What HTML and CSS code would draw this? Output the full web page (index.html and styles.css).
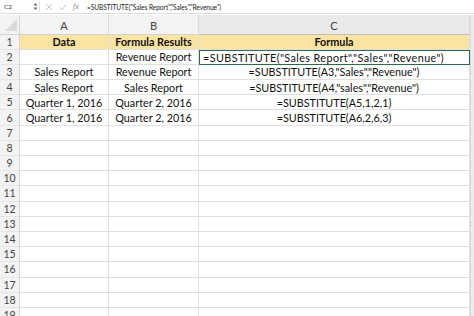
FILE: index.html
```html
<!DOCTYPE html>
<html>
<head>
<meta charset="utf-8">
<link rel="stylesheet" href="styles.css">
</head>
<body>
<div class="app">
  <div class="fbar">
    <div class="namebox">C2</div>
    <div class="stepper">
      <svg width="5" height="9" viewBox="0 0 5 9"><path d="M0.5 3.5 L2.5 1 L4.5 3.5 Z M0.5 5.5 L2.5 8 L4.5 5.5 Z" fill="#666"/></svg>
    </div>
    <div class="fsep"></div>
    <div class="ficons">
      <svg width="8" height="8" viewBox="0 0 8 8"><path d="M1 1 L7 7 M7 1 L1 7" stroke="#c4c4c4" stroke-width="1"/></svg>
      <svg width="8" height="8" viewBox="0 0 8 8"><path d="M1 4.5 L3 6.5 L7 1.5" stroke="#c4c4c4" stroke-width="1" fill="none"/></svg>
      <span class="fx">fx</span>
    </div>
    <div class="ftext">=SUBSTITUTE("Sales Report","Sales","Revenue")</div>
  </div>
  <div class="sheet">
    <div class="corner"><svg width="14" height="14" viewBox="0 0 14 14"><path d="M13 1 L13 13 L1 13 Z" fill="#d9d9d9"/></svg></div>
    <div class="colh">A</div>
    <div class="colh">B</div>
    <div class="colh sel">C</div>
    <div class="edge"></div>

    <div class="rowh">1</div>
    <div class="cell hd">Data</div>
    <div class="cell hd">Formula Results</div>
    <div class="cell hd">Formula</div>
    <div class="edge"></div>

    <div class="rowh">2</div>
    <div class="cell"></div>
    <div class="cell">Revenue Report</div>
    <div class="cell active">=SUBSTITUTE("Sales Report","Sales","Revenue")</div>
    <div class="edge"></div>

    <div class="rowh">3</div>
    <div class="cell">Sales Report</div>
    <div class="cell">Revenue Report</div>
    <div class="cell">=SUBSTITUTE(A3,"Sales","Revenue")</div>
    <div class="edge"></div>

    <div class="rowh">4</div>
    <div class="cell">Sales Report</div>
    <div class="cell">Sales Report</div>
    <div class="cell">=SUBSTITUTE(A4,"sales","Revenue")</div>
    <div class="edge"></div>

    <div class="rowh">5</div>
    <div class="cell">Quarter 1, 2016</div>
    <div class="cell">Quarter 2, 2016</div>
    <div class="cell">=SUBSTITUTE(A5,1,2,1)</div>
    <div class="edge"></div>

    <div class="rowh">6</div>
    <div class="cell">Quarter 1, 2016</div>
    <div class="cell">Quarter 2, 2016</div>
    <div class="cell">=SUBSTITUTE(A6,2,6,3)</div>
    <div class="edge"></div>

    <div class="rowh">7</div><div class="cell"></div><div class="cell"></div><div class="cell"></div><div class="edge"></div>
    <div class="rowh">8</div><div class="cell"></div><div class="cell"></div><div class="cell"></div><div class="edge"></div>
    <div class="rowh">9</div><div class="cell"></div><div class="cell"></div><div class="cell"></div><div class="edge"></div>
    <div class="rowh">10</div><div class="cell"></div><div class="cell"></div><div class="cell"></div><div class="edge"></div>
    <div class="rowh">11</div><div class="cell"></div><div class="cell"></div><div class="cell"></div><div class="edge"></div>
    <div class="rowh">12</div><div class="cell"></div><div class="cell"></div><div class="cell"></div><div class="edge"></div>
    <div class="rowh">13</div><div class="cell"></div><div class="cell"></div><div class="cell"></div><div class="edge"></div>
    <div class="rowh">14</div><div class="cell"></div><div class="cell"></div><div class="cell"></div><div class="edge"></div>
    <div class="rowh">15</div><div class="cell"></div><div class="cell"></div><div class="cell"></div><div class="edge"></div>
    <div class="rowh">16</div><div class="cell"></div><div class="cell"></div><div class="cell"></div><div class="edge"></div>
    <div class="rowh">17</div><div class="cell"></div><div class="cell"></div><div class="cell"></div><div class="edge"></div>
    <div class="rowh">18</div><div class="cell"></div><div class="cell"></div><div class="cell"></div><div class="edge"></div>
    <div class="rowh">19</div><div class="cell"></div><div class="cell"></div><div class="cell"></div><div class="edge"></div>
  </div>
</div>
</body>
</html>
```
FILE: styles.css
```css
html, body {
  margin: 0;
  padding: 0;
  background: #ffffff;
  overflow: hidden;
}
.app {
  width: 474px;
  height: 316px;
  overflow: hidden;
  font-family: Lato, "Open Sans", sans-serif;
  color: #111;
}
.fbar {
  height: 13px;
  display: flex;
  align-items: center;
  background: #fff;
  border-bottom: 1px solid #dcdcdc;
  font-size: 7px;
}
.namebox {
  width: 29px;
  padding-left: 4px;
  color: #333;
  font-size: 6.5px;
}
.stepper {
  width: 6px;
  display: flex;
  align-items: center;
}
.fsep {
  width: 1px;
  height: 11px;
  background: #e0e0e0;
}
.ficons {
  display: flex;
  align-items: center;
  gap: 6px;
  padding-left: 5px;
  width: 42px;
}
.fx {
  font-family: "Liberation Serif", serif;
  font-style: italic;
  font-size: 8px;
  color: #888;
}
.ftext {
  color: #222;
  font-size: 6.6px;
  letter-spacing: -0.05px;
}
.sheet {
  margin-top: 1px;
  display: grid;
  grid-template-columns: 20px 89px 90px 271px 4px;
  grid-template-rows: 19.5px repeat(19, 15.2px);
  background: #fff;
}
.corner {
  background: #f3f3f3;
  border-right: 1px solid #d4d4d4;
  border-bottom: 1px solid #d4d4d4;
  display: flex;
  align-items: flex-end;
  justify-content: flex-end;
  box-sizing: border-box;
  padding: 0 1px 2px 0;
}
.colh {
  background: #f3f3f3;
  border-right: 1px solid #dcdcdc;
  border-bottom: 1px solid #d4d4d4;
  box-sizing: border-box;
  display: flex;
  align-items: center;
  justify-content: center;
  font-size: 11px;
  color: #444;
  padding-top: 2px;
}
.colh.sel {
  background: #e9e9e9;
  border-bottom: 1px solid #bdbdbd;
}
.rowh {
  background: #f3f3f3;
  border-right: 1px solid #d4d4d4;
  border-bottom: 1px solid #e6e6e6;
  box-sizing: border-box;
  display: flex;
  align-items: center;
  justify-content: center;
  font-size: 10.5px;
  color: #444;
}
.cell {
  border-right: 1px solid #e0e0e0;
  border-bottom: 1px solid #e0e0e0;
  box-sizing: border-box;
  display: flex;
  align-items: center;
  justify-content: center;
  font-size: 10.8px;
  white-space: nowrap;
  overflow: visible;
  color: #111;
}
.cell.hd {
  background: #fbe3a1;
  font-weight: bold;
}
.cell.active {
  border: 1px solid #2f6b4b;
  justify-content: flex-start;
  padding-left: 3px;
  letter-spacing: 0.4px;
}
.edge {
  background: #ececec;
  border-left: 1px solid #dadada;
}
```
